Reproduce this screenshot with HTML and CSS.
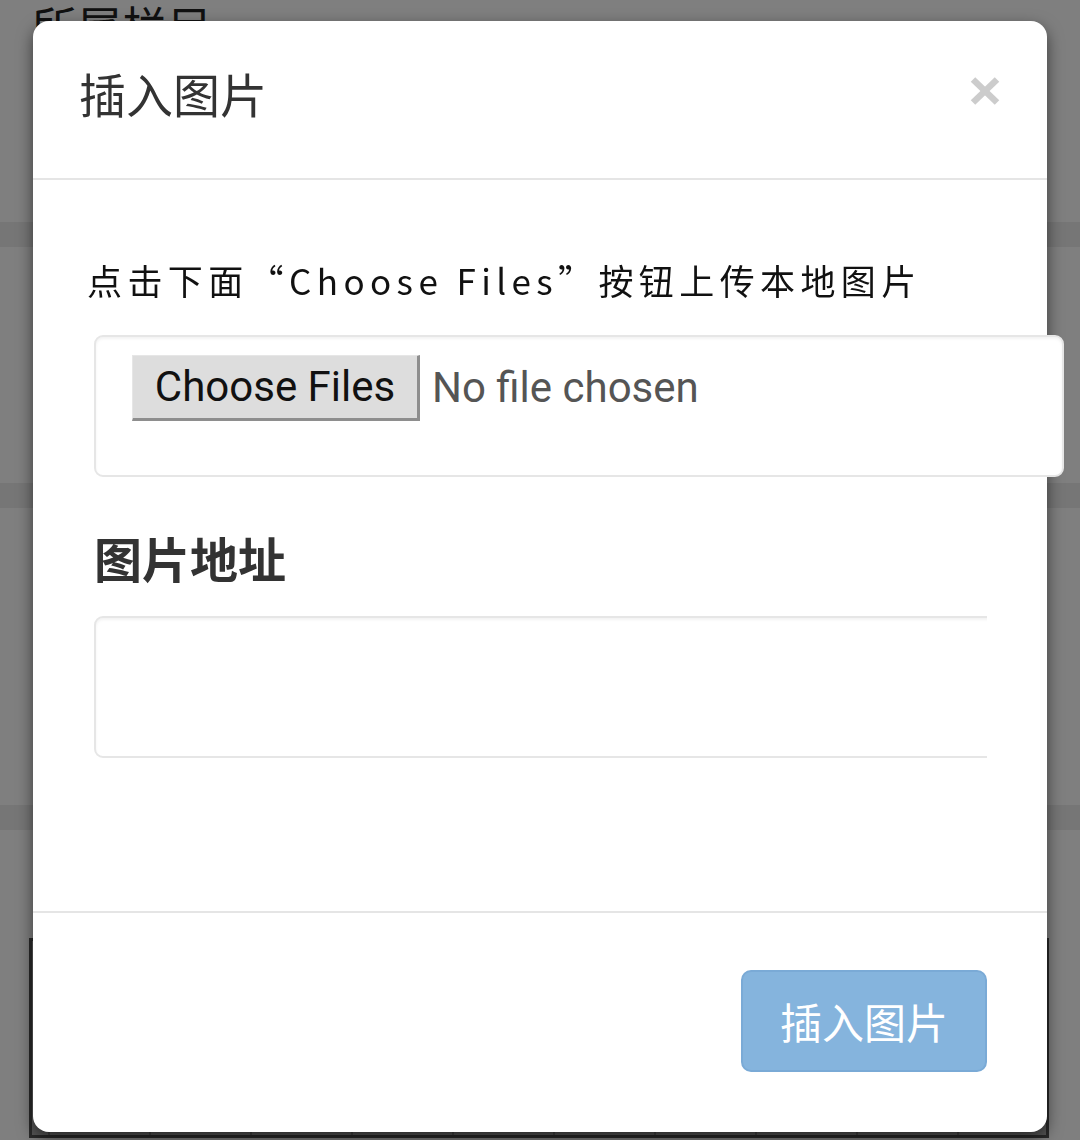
FILE: index.html
```html
<!DOCTYPE html>
<html lang="zh-CN">
<head>
<meta charset="utf-8">
<title>插入图片</title>
<link rel="stylesheet" href="styles.css">
</head>
<body>
<div class="page">
  <h2 class="page-title">所属栏目</h2>
  <div class="band band-1"></div>
  <div class="band band-2"></div>
  <div class="band band-3"></div>
  <div class="bg-table">
    <div class="bg-cell"></div><div class="bg-cell"></div><div class="bg-cell"></div><div class="bg-cell"></div><div class="bg-cell"></div>
    <div class="bg-cell"></div><div class="bg-cell"></div><div class="bg-cell"></div><div class="bg-cell"></div><div class="bg-cell"></div>
  </div>
</div>
<div class="backdrop"></div>
<div class="modal">
  <div class="modal-header">
    <h4 class="modal-title">插入图片</h4>
    <button class="close" type="button" aria-label="Close">
      <svg width="30" height="28" viewBox="0 0 30 28" aria-hidden="true">
        <line x1="3" y1="2.5" x2="27" y2="25.5" stroke="#cccccc" stroke-width="6.5"/>
        <line x1="27" y1="2.5" x2="3" y2="25.5" stroke="#cccccc" stroke-width="6.5"/>
      </svg>
    </button>
  </div>
  <div class="modal-body">
    <p class="hint">点击下面“Choose Files”按钮上传本地图片</p>
    <div class="file-box">
      <span class="file-btn">Choose Files</span>
      <span class="file-name">No file chosen</span>
    </div>
    <label class="field-label">图片地址</label>
    <div class="input-clip">
      <div class="text-input"></div>
    </div>
  </div>
  <div class="modal-footer">
    <button class="btn-primary" type="button">插入图片</button>
  </div>
</div>
</body>
</html>
```

FILE: styles.css
```css
html, body {
  margin: 0;
  padding: 0;
}
body {
  width: 1080px;
  height: 1140px;
  overflow: hidden;
  background: #ffffff;
  font-family: "Noto Sans CJK SC", "Noto Sans", sans-serif;
  position: relative;
}

/* background page */
.page {
  display: flex;
  flex-direction: column;
}
.page-title {
  margin: -4px 0 0 32px;
  font-size: 45px;
  font-weight: normal;
  line-height: 60px;
  color: #222;
}
.band {
  height: 25px;
  background: #ececec;
}
.band-1 { margin-top: 166px; }
.band-2 { margin-top: 236px; }
.band-3 { margin-top: 297px; }
.bg-table {
  margin: 108px 0 0 29px;
  width: 1020px;
  height: 200px;
  border: 3px solid #555;
  background: #b0b0b0;
  display: flex;
  padding-left: 16px;
  box-sizing: border-box;
}
.bg-cell {
  width: 99px;
  border-left: 2px solid #888;
  flex: none;
}

.backdrop {
  position: fixed;
  inset: 0;
  background: rgba(0, 0, 0, 0.5);
}

/* modal */
.modal {
  position: absolute;
  left: 33px;
  top: 21px;
  width: 1014px;
  height: 1111px;
  box-sizing: border-box;
  background: #fff;
  border-radius: 16px;
  box-shadow: 0 6px 16px rgba(0, 0, 0, 0.55);
  display: flex;
  flex-direction: column;
}
.modal-header {
  height: 159px;
  box-sizing: border-box;
  border-bottom: 2px solid #e5e5e5;
  display: flex;
  justify-content: space-between;
  align-items: center;
  padding: 0 47px 0 46px;
  flex: none;
}
.modal-title {
  margin: 0 0 14px 0;
  font-size: 47px;
  font-weight: normal;
  line-height: 50px;
  color: #333;
}
.close {
  align-self: flex-start;
  margin-top: 56px;
  padding: 0;
  border: 0;
  background: transparent;
  width: 30px;
  height: 28px;
  display: block;
}
.close svg { display: block; }

.modal-body {
  flex: 1;
  padding: 0 0 0 54px;
  display: flex;
  flex-direction: column;
  align-items: flex-start;
}
.hint {
  margin: 75px 0 0 0;
  font-size: 35px;
  line-height: 49px;
  letter-spacing: 5.4px;
  color: #111;
  white-space: nowrap;
}
.file-box {
  margin: 31px 0 0 7px;
  width: 970px;
  height: 142px;
  box-sizing: border-box;
  border: 2px solid #e6e6e6;
  border-radius: 9px;
  box-shadow: inset 0 2px 3px rgba(0, 0, 0, 0.05);
  background: #fff;
  padding: 18px 0 0 36px;
  display: flex;
  align-items: flex-start;
  position: relative;
  z-index: 1;
}
.file-btn {
  width: 288px;
  height: 66px;
  box-sizing: border-box;
  background: #dddddd;
  border-top: 1px solid #e6e6e6;
  border-left: 1px solid #e6e6e6;
  border-right: 3px solid #8e8e8e;
  border-bottom: 3px solid #8e8e8e;
  font-family: Roboto, "Liberation Sans", sans-serif;
  font-size: 42px;
  line-height: 62px;
  color: #111;
  text-align: center;
  flex: none;
}
.file-name {
  margin-left: 12px;
  font-family: Roboto, "Liberation Sans", sans-serif;
  font-size: 42px;
  line-height: 66px;
  color: #555;
}
.field-label {
  margin: 52px 0 0 7px;
  font-size: 48px;
  font-weight: bold;
  line-height: 56px;
  color: #333;
}
.input-clip {
  margin: 31px 0 0 7px;
  width: 893px;
  overflow: hidden;
}
.text-input {
  width: 970px;
  height: 142px;
  box-sizing: border-box;
  border: 2px solid #e6e6e6;
  border-radius: 9px;
  box-shadow: inset 0 2px 3px rgba(0, 0, 0, 0.05);
}

.modal-footer {
  height: 221px;
  box-sizing: border-box;
  border-top: 2px solid #e5e5e5;
  display: flex;
  justify-content: flex-end;
  align-items: flex-start;
  padding: 57px 60px 0 0;
  flex: none;
}
.btn-primary {
  width: 246px;
  height: 102px;
  box-sizing: border-box;
  background: #85b4dd;
  border: 2px solid #7aaad6;
  border-radius: 10px;
  color: #fff;
  font-family: "Noto Sans CJK SC", "Noto Sans", sans-serif;
  font-size: 42px;
  line-height: 50px;
  padding: 0;
}
```
